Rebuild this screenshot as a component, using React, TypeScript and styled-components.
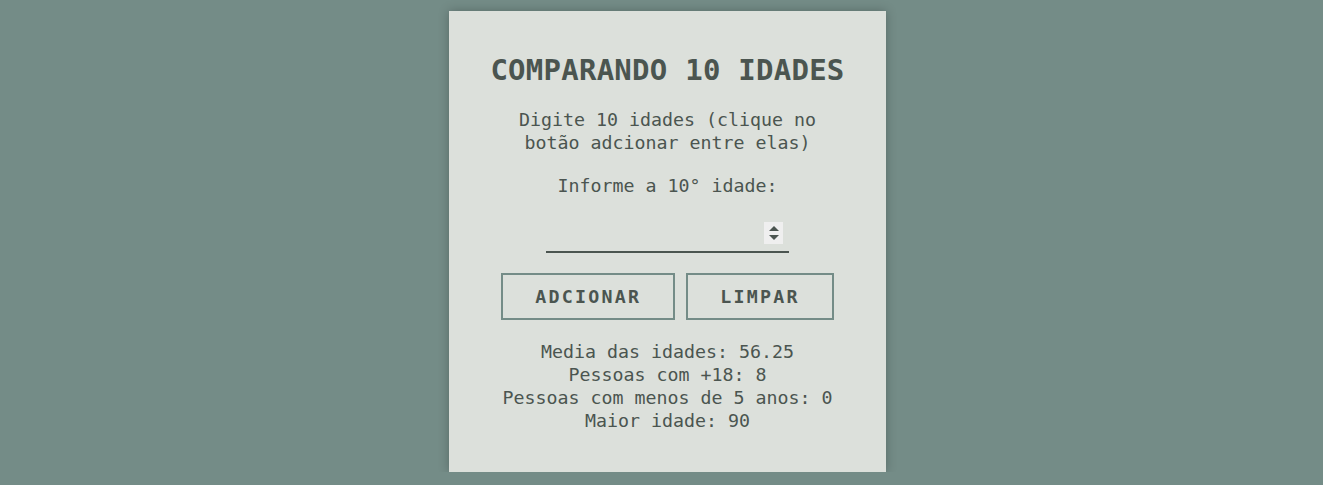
import React, { useState } from 'react';
import styled, { createGlobalStyle } from 'styled-components';

const palette = {
    page: '#748c87',
    card: '#dce0db',
    text: '#4b5550',
    border: '#748c87',
    spinner: '#efefef',
};

const GlobalStyle = createGlobalStyle`
    html, body {
        margin: 0;
        padding: 0;
        background-color: ${palette.page};
        overflow: hidden;
    }
    body {
        font-family: "DejaVu Sans Mono", "Liberation Mono", monospace;
        color: ${palette.text};
    }
`

const Page = styled.div`
    display: flex;
    justify-content: center;
    align-items: flex-start;
    padding: 11px 0 0 12px;
`

const Card = styled.main`
    width: 437px;
    box-sizing: border-box;
    padding: 42px 24px 40px;
    background-color: ${palette.card};
    box-shadow: 0 0 10px rgba(0, 0, 0, 0.25);
    display: flex;
    flex-direction: column;
    align-items: center;
    gap: 20px;
    text-align: center;
`

const Title = styled.h1`
    margin: 0;
    font-size: 29px;
    line-height: 34.8px;
    letter-spacing: 0.25px;
    font-weight: 700;
`

const Text = styled.p`
    margin: 0;
    font-size: 18.3px;
    line-height: 23px;
    width: 300px;
`

const Label = styled.label`
    font-size: 18.3px;
    line-height: 23px;
`

const InputWrap = styled.span`
    position: relative;
    display: block;
    margin-top: 5px;
`

const AgeInput = styled.input`
    display: block;
    width: 211px;
    height: 22px;
    padding: 0 32px 7px 0;
    box-sizing: content-box;
    border: none;
    border-bottom: 2px solid ${palette.text};
    background: transparent;
    outline: none;
    font-family: inherit;
    font-size: 18px;
    color: ${palette.text};
    appearance: textfield;

    &::-webkit-inner-spin-button,
    &::-webkit-outer-spin-button {
        -webkit-appearance: none;
        margin: 0;
    }
`

// desenho das setinhas do campo numerico
const Spinner = styled.span`
    position: absolute;
    top: 0;
    right: 6px;
    width: 19px;
    height: 22px;
    background-color: ${palette.spinner};
    display: flex;
    flex-direction: column;
    align-items: center;
    justify-content: center;
    gap: 4px;
    pointer-events: none;
`

type ArrowProps = { $down?: boolean };

const Arrow = styled.span<ArrowProps>`
    width: 0;
    height: 0;
    border-left: 5px solid transparent;
    border-right: 5px solid transparent;
    ${(p) => p.$down
        ? `border-top: 5px solid ${palette.text};`
        : `border-bottom: 5px solid ${palette.text};`}
`

const ButtonRow = styled.div`
    display: flex;
    gap: 11px;
`

const Button = styled.button`
    height: 47px;
    padding: 0 32px;
    border: 2px solid ${palette.border};
    background: transparent;
    font-family: inherit;
    font-size: 18.3px;
    font-weight: 700;
    letter-spacing: 2.25px;
    color: ${palette.text};
    cursor: pointer;
`

const Results = styled.div`
    font-size: 18.3px;
    line-height: 23px;
`

export default function App() {
    const [age, setAge] = useState('');

    return (
        <Page>
            <GlobalStyle />
            <Card>
                <Title>COMPARANDO 10 IDADES</Title>
                <Text>Digite 10 idades (clique no botão adcionar entre elas)</Text>
                <Label htmlFor="idade">Informe a 10° idade:</Label>
                <InputWrap>
                    <AgeInput
                        id="idade"
                        type="number"
                        value={age}
                        onChange={(e) => setAge(e.target.value)}
                    />
                    <Spinner>
                        <Arrow />
                        <Arrow $down />
                    </Spinner>
                </InputWrap>
                <ButtonRow>
                    <Button>ADCIONAR</Button>
                    <Button>LIMPAR</Button>
                </ButtonRow>
                <Results>
                    <div>Media das idades: 56.25</div>
                    <div>Pessoas com +18: 8</div>
                    <div>Pessoas com menos de 5 anos: 0</div>
                    <div>Maior idade: 90</div>
                </Results>
            </Card>
        </Page>
    );
}
